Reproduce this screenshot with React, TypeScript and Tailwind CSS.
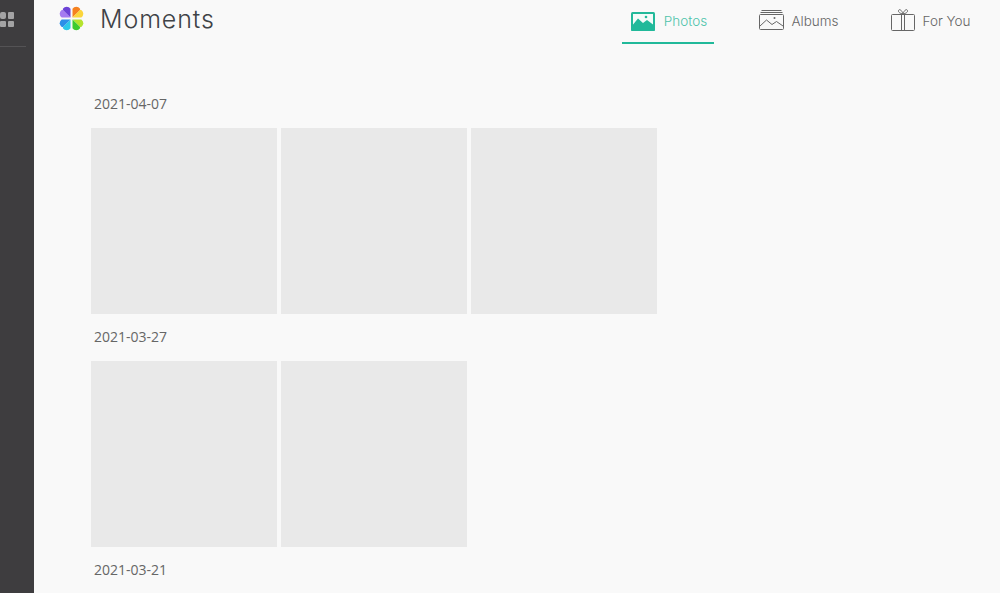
import React from 'react';

const GROUPS = [
    { date: '2021-04-07', count: 3 },
    { date: '2021-03-27', count: 2 },
    { date: '2021-03-21', count: 0 },
];

const PETALS = [
    { rotate: 0, first: '#6d43d6', second: '#a57bf0' },
    { rotate: 90, first: '#fbd53c', second: '#f5811f' },
    { rotate: 180, first: '#3ecb2f', second: '#b5e32e' },
    { rotate: 270, first: '#2a8fe8', second: '#2bc8e8' },
];

function FlowerLogo() {
    return (
        <svg width="25" height="25" viewBox="-12.5 -12.5 25 25">
            {PETALS.map((petal) => (
                <g key={petal.rotate} transform={`rotate(${petal.rotate})`}>
                    <path d="M-1 -1 H-9.8 A4.6 4.6 0 0 1 -9.8 -8.6 L-8.6 -8.6 Z" fill={petal.second} />
                    <path d="M-1 -1 V-9.8 A4.6 4.6 0 0 0 -8.6 -9.8 L-8.6 -8.6 Z" fill={petal.first} />
                </g>
            ))}
        </svg>
    );
}

function PhotosIcon() {
    return (
        <svg width="24" height="19" viewBox="0 0 24 19">
            <rect x="0" y="0" width="24" height="19" rx="1.5" fill="#21b99a" />
            <rect x="2" y="2" width="20" height="12" fill="#f3fbf9" />
            <path d="M0 15 L7 6.5 L12 11 L16 8 L24 14 V17.5 A1.5 1.5 0 0 1 22.5 19 H1.5 A1.5 1.5 0 0 1 0 17.5 Z" fill="#21b99a" />
            <circle cx="15" cy="5" r="1.3" fill="#21b99a" />
        </svg>
    );
}

function AlbumsIcon() {
    return (
        <svg className="-mt-[2px]" width="25" height="20" viewBox="0 0 25 20" fill="none" stroke="#666" strokeWidth="1">
            <path d="M2.5 0.5 H22.5 M1.5 2.5 H23.5" />
            <rect x="0.5" y="4.5" width="24" height="15" rx="1" />
            <path d="M1 16 L7.5 10 L13 14.5 L17.5 11.5 L24 16" />
            <circle cx="15.5" cy="8" r="1" fill="#666" stroke="none" />
        </svg>
    );
}

function GiftIcon() {
    return (
        <svg className="-mt-[3px]" width="24" height="22" viewBox="0 0 24 22" fill="none" stroke="#666" strokeWidth="1">
            <rect x="0.5" y="5.5" width="23" height="16" rx="1" />
            <path d="M10.5 5.5 V21.5 M13.5 5.5 V21.5" />
            <path d="M12 5 C9 4.5 7 3 7.5 1.5 C8 0 10.5 0.2 12 5 C13.5 0.2 16 0 16.5 1.5 C17 3 15 4.5 12 5 Z" />
        </svg>
    );
}

function Tab({ icon, label, active, className }: { icon: React.ReactNode; label: string; active?: boolean; className: string }) {
    return (
        <div className={`flex h-[44px] items-center justify-center font-['Inter'] text-[13.5px] font-light ${className} ${active ? 'border-b-2 border-[#21b99a] text-[#4fc4ab]' : 'pb-[2px] text-[#666]'}`}>
            {icon}
            <span>{label}</span>
        </div>
    );
}

export default function App() {
    return (
        <div className="flex h-screen overflow-hidden bg-[#f9f9f9] font-['Open_Sans','Liberation_Sans',sans-serif]">
            {/* sidebar is partly scrolled out to the left */}
            <aside className="w-[34px] shrink-0 bg-[#3e3d3f]">
                <div className="h-[47px] w-[26px] overflow-hidden border-b border-[#545355] pt-[12px]">
                    <div className="grid w-[14px] grid-cols-2 gap-[2px]">
                        <div className="h-[7px] rounded-[2px] bg-[#a3a3a4]" />
                        <div className="h-[7px] rounded-[1px] bg-[#a3a3a4]" />
                        <div className="h-[6px] rounded-[1px] bg-[#a3a3a4]" />
                        <div className="h-[6px] rounded-[1px] bg-[#a3a3a4]" />
                    </div>
                </div>
            </aside>

            <main className="min-w-0 flex-1">
                <header className="flex h-[44px] items-start">
                    <div className="ml-[25px] mt-[6px]">
                        <FlowerLogo />
                    </div>
                    <h1 className="ml-[16px] mt-[2px] font-['Inter'] text-[25px] leading-[34px] font-light tracking-[0.9px] text-[#3f4347]">Moments</h1>
                    <nav className="ml-auto mr-[21px] flex gap-[40px]">
                        <Tab icon={<PhotosIcon />} label="Photos" active className="w-[92px] gap-[9px] pl-[2px]" />
                        <Tab icon={<AlbumsIcon />} label="Albums" className="w-[90px] gap-[7px]" />
                        <Tab icon={<GiftIcon />} label="For You" className="w-[95px] gap-[8px] pr-[2px]" />
                    </nav>
                </header>

                <div className="pl-[57px] pt-[50px]">
                    {GROUPS.map((group) => (
                        <section key={group.date}>
                            <p className="ml-[3px] h-[34px] text-[14px] leading-[19px] text-[#666]">{group.date}</p>
                            {group.count > 0 && (
                                <div className="mb-[13px] flex gap-[4px]">
                                    {Array.from({ length: group.count }).map((_, i) => (
                                        <div key={i} className="h-[186px] w-[186px] bg-[#e9e9e9]" />
                                    ))}
                                </div>
                            )}
                        </section>
                    ))}
                </div>
            </main>
        </div>
    );
}
